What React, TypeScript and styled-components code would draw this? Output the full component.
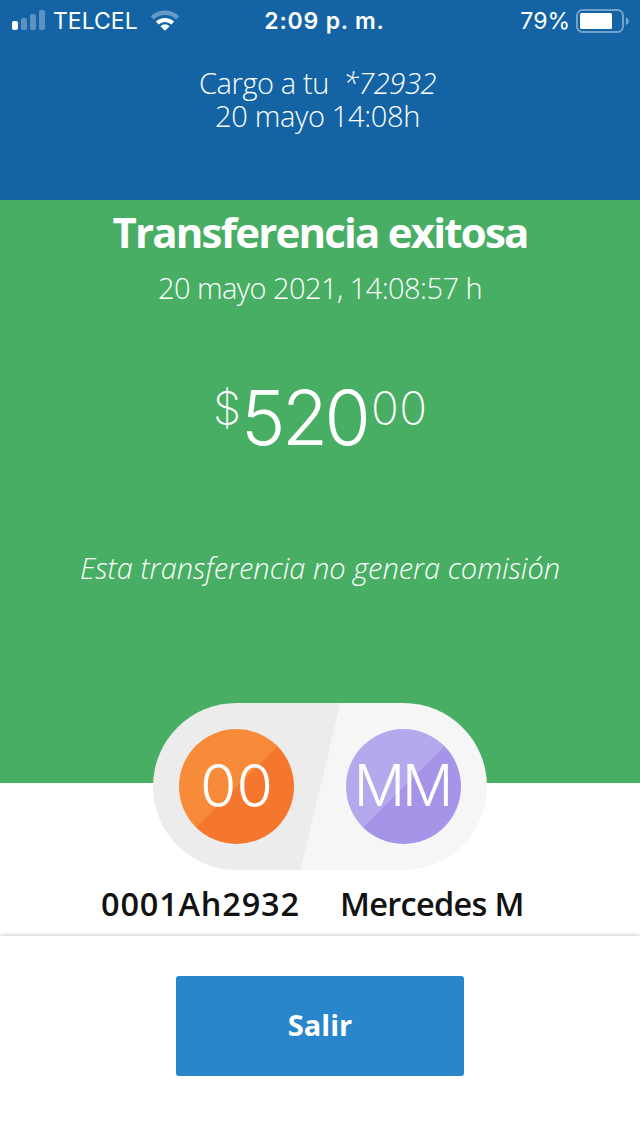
import React from 'react';
import styled, { createGlobalStyle } from 'styled-components';

const GlobalStyle = createGlobalStyle`
  * { box-sizing: border-box; }
  body {
    margin: 0;
    background: #fff;
    font-family: 'Open Sans', 'Noto Sans', sans-serif;
    color: #fff;
  }
`;

const Screen = styled.div`
  width: 640px;
  height: 1136px;
  display: flex;
  flex-direction: column;
  overflow: hidden;
  background: #fff;
`;

const Text = styled.span<{ $size: number; $line: number; $weight?: number; $spacing?: number; $italic?: boolean }>`
  display: block;
  white-space: pre;
  font-size: ${(p) => p.$size}px;
  line-height: ${(p) => p.$line}px;
  font-weight: ${(p) => p.$weight ?? 350};
  letter-spacing: ${(p) => p.$spacing ?? 0}px;
  font-style: ${(p) => (p.$italic ? 'italic' : 'normal')};
`;

const Figure = styled(Text)`
  font-family: Inter, 'Open Sans', sans-serif;
  font-weight: ${(p) => p.$weight ?? 300};
  margin-right: ${(p) => -(p.$spacing ?? 0)}px;
`;

const Header = styled.header`
  height: 200px;
  flex: none;
  background: #1464a5;
`;

const StatusBar = styled.div`
  height: 40px;
  padding: 0 11px 0 12px;
  display: grid;
  grid-template-columns: 1fr auto 1fr;
  align-items: center;
  font-family: Inter, Roboto, sans-serif;
`;

const StatusGroup = styled.div<{ $end?: boolean }>`
  display: flex;
  align-items: center;
  justify-content: ${(p) => (p.$end ? 'flex-end' : 'flex-start')};
  gap: ${(p) => (p.$end ? 6 : 7)}px;
`;

const Clock = styled(Text)`
  padding-left: 8px;
`;

const Charge = styled.div`
  padding-top: 26px;
  display: flex;
  flex-direction: column;
  align-items: center;
`;

const ChargeLine = styled.div`
  display: flex;
  gap: 14px;
  padding-right: 5px;
`;

const ChargeDate = styled(Text)`
  padding-right: 5px;
`;

const Success = styled.section`
  height: 583px;
  flex: none;
  background: #48ae64;
  display: flex;
  flex-direction: column;
  align-items: center;
`;

const Amount = styled.div`
  display: flex;
  align-items: flex-start;
  margin: 73px 0 63px;
  height: 100px;
`;

const Parties = styled.section`
  position: relative;
  flex: none;
  height: 153px;
  display: flex;
  flex-direction: column;
  align-items: center;
`;

const Pill = styled.div`
  width: 334px;
  height: 167px;
  flex: none;
  margin-top: -80px;
  border-radius: 84px;
  display: flex;
  align-items: center;
  justify-content: space-between;
  padding: 0 26px;
  background: linear-gradient(103.5deg, #ececec 50%, #f6f6f6 50.2%);
`;

const Avatar = styled.div<{ $light: string; $dark: string }>`
  width: 115px;
  height: 115px;
  padding-bottom: 1px;
  border-radius: 50%;
  display: flex;
  align-items: center;
  justify-content: center;
  background: linear-gradient(135deg, ${(p) => p.$light} 50%, ${(p) => p.$dark} 50.5%);
`;

const Names = styled.div`
  display: flex;
  align-self: stretch;
  padding: 13px 0 0 101px;
  color: #121212;
`;

const NameCell = styled.div`
  width: 239px;
`;

const Footer = styled.footer`
  position: relative;
  flex: 1;
  display: flex;
  justify-content: center;
  align-items: flex-start;
  padding-top: 40px;
  background: #fff;
  box-shadow: 0 -1px 4px rgba(0, 0, 0, 0.2);
`;

const ExitButton = styled.button`
  width: 288px;
  height: 100px;
  border: 0;
  border-radius: 3px;
  padding: 0 0 3px;
  background: #2a86ca;
  color: #fff;
  font-family: inherit;
  display: flex;
  align-items: center;
  justify-content: center;
`;

const StatusIcon = styled.svg`
  flex: none;
  margin-bottom: 2px;
`;

const SignalIcon = () => (
  <StatusIcon width="34" height="20" viewBox="0 0 34 20" fill="#fff">
    <rect x="0" y="11" width="6" height="9" rx="2" />
    <rect x="9" y="8" width="6" height="12" rx="2" opacity=".3" />
    <rect x="18" y="4" width="6" height="16" rx="2" opacity=".3" />
    <rect x="27" y="0" width="6" height="20" rx="2" opacity=".3" />
  </StatusIcon>
);

const WifiSvg = styled(StatusIcon)`
  margin-left: 5px;
`;

const WifiIcon = () => (
  <WifiSvg width="30" height="21" viewBox="0 0 30 21" fill="#fff">
    <path d="M0.7 6.2a20.6 20.6 0 0 1 28.6 0l-3 3.2a16.8 16.8 0 0 0-22.6 0z" opacity=".35" />
    <path d="M5.9 11.6a13.2 13.2 0 0 1 18.2 0l-2.7 2.8a9.4 9.4 0 0 0-12.8 0z" />
    <path d="M10.4 16.2a6.7 6.7 0 0 1 9.2 0L15 20.8z" />
  </WifiSvg>
);

const BatteryIcon = () => (
  <svg width="53" height="24" viewBox="0 0 53 24">
    <rect x="1" y="1" width="46" height="22" rx="5.5" fill="none" stroke="#fff" strokeOpacity=".4" strokeWidth="2" />
    <rect x="4" y="4" width="32" height="16" rx="1.5" fill="#fff" />
    <path d="M50 8.5c3.6 1.4 3.6 6 0 7.4z" fill="#fff" opacity=".45" />
  </svg>
);

export default function App() {
  return (
    <>
      <GlobalStyle />
      <Screen>
        <Header>
          <StatusBar>
            <StatusGroup>
              <SignalIcon />
              <Text $size={23} $line={42} $weight={400}>TELCEL</Text>
              <WifiIcon />
            </StatusGroup>
            <Clock $size={23} $line={42} $weight={600} $spacing={0.8}>2:09 p. m.</Clock>
            <StatusGroup $end>
              <Text $size={23} $line={42} $weight={400}>79%</Text>
              <BatteryIcon />
            </StatusGroup>
          </StatusBar>
          <Charge>
            <ChargeLine>
              <Text $size={29} $line={33} $spacing={-0.4}>Cargo a tu</Text>
              <Text $size={29} $line={33} $spacing={-0.4} $italic>*72932</Text>
            </ChargeLine>
            <ChargeDate $size={29} $line={33} $spacing={-0.35}>20 mayo 14:08h</ChargeDate>
          </Charge>
        </Header>
        <Success>
          <Text $size={42} $line={64} $weight={700} $spacing={-1.8}>Transferencia exitosa</Text>
          <Text $size={29} $line={48} $spacing={-0.55}>20 mayo 2021, 14:08:57 h</Text>
          <Amount>
            <Figure $size={45} $line={46} $weight={250} $spacing={1}>$</Figure>
            <Figure $size={75} $line={65} $spacing={-3.5}>520</Figure>
            <Figure $size={46} $line={46} $weight={250} $spacing={0.5}>00</Figure>
          </Amount>
          <Text $size={29} $line={40} $italic>Esta transferencia no genera comisión</Text>
        </Success>
        <Parties>
          <Pill>
            <Avatar $light="#f88b3a" $dark="#f5772d">
              <Figure $size={59} $line={100}>00</Figure>
            </Avatar>
            <Avatar $light="#b5a8ed" $dark="#a594e8">
              <Figure $size={57} $line={100} $spacing={-3}>MM</Figure>
            </Avatar>
          </Pill>
          <Names>
            <NameCell><Text $size={32.5} $line={42} $weight={600} $spacing={0.8}>0001Ah2932</Text></NameCell>
            <NameCell><Text $size={32.5} $line={42} $weight={600} $spacing={-0.7}>Mercedes M</Text></NameCell>
          </Names>
        </Parties>
        <Footer>
          <ExitButton>
            <Text $size={29} $line={40} $weight={700}>Salir</Text>
          </ExitButton>
        </Footer>
      </Screen>
    </>
  );
}
